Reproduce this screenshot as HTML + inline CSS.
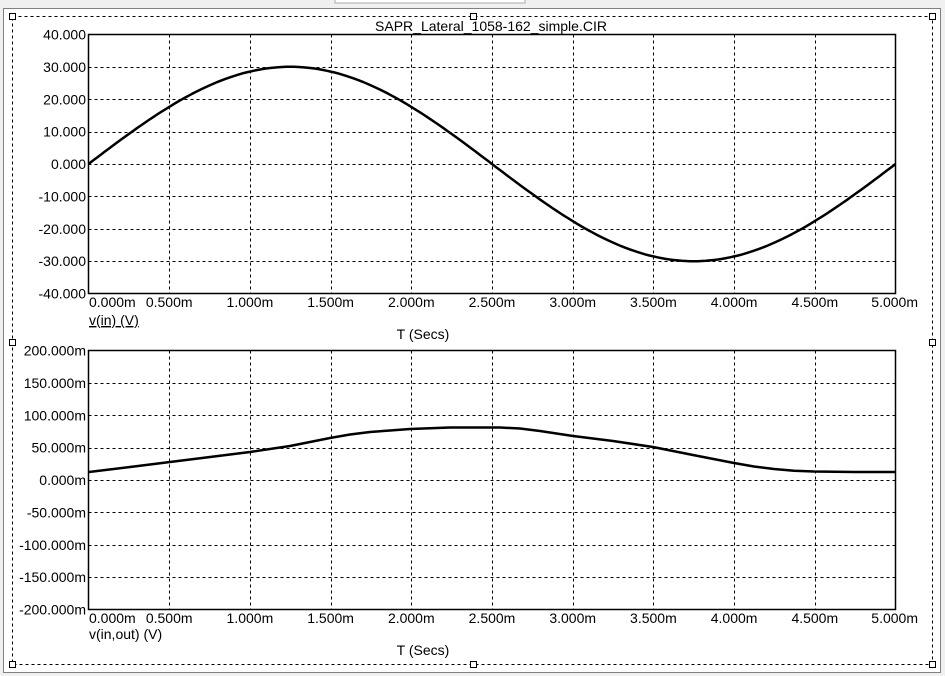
<!DOCTYPE html>
<html><head><meta charset="utf-8"><style>
html,body{margin:0;padding:0;background:#f0f0f0;width:945px;height:676px;overflow:hidden}
svg{display:block}
text{font-family:"Liberation Sans",Arial,sans-serif;font-size:14px;fill:#000}
</style></head><body>
<svg id="s" width="945" height="676" xmlns="http://www.w3.org/2000/svg">
<rect x="0" y="0" width="945" height="676" fill="#f0f0f0"/>
<rect x="335" y="-2" width="190" height="5" fill="#fff" stroke="#aaa"/>
<rect x="3.5" y="8.5" width="937" height="664" fill="#fff" stroke="#808080"/>
<rect x="12.5" y="16.5" width="920" height="648" fill="none" stroke="#000" stroke-dasharray="3,3"/>
<g fill="#fff" stroke="#000">
<rect x="9.5" y="13.5" width="6" height="6"/><rect x="470.5" y="13.5" width="6" height="6"/><rect x="929.5" y="13.5" width="6" height="6"/>
<rect x="9.5" y="339.5" width="6" height="6"/><rect x="929.5" y="339.5" width="6" height="6"/>
<rect x="9.5" y="661.5" width="6" height="6"/><rect x="470.5" y="661.5" width="6" height="6"/><rect x="929.5" y="661.5" width="6" height="6"/>
</g>
<text x="491" y="31" text-anchor="middle">SAPR_Lateral_1058-162_simple.CIR</text>
<g id="g"></g>
<path id="p1" fill="none" stroke="#000" stroke-width="2.5"/>
<polyline fill="none" stroke="#000" stroke-width="2.5" stroke-linejoin="round" points="89,472 130,467 170,462 210,457 250,452 290,446 310,442 330,438 350,434.5 370,432 390,430.5 410,429 450,427.5 500,427.5 520,428.5 540,431 573,436 613,441 653,447 693,455 734,463 754,466.5 774,469 794,470.8 814,471.5 855,472 895,472"/>
<text x="89" y="325" text-decoration="underline">v(in) (V)</text>
<text x="423" y="339" text-anchor="middle">T (Secs)</text>
<text x="89" y="639">v(in,out) (V)</text>
<text x="423" y="655" text-anchor="middle">T (Secs)</text>
</svg>
<script>
var NS="http://www.w3.org/2000/svg",g=document.getElementById("g");
function el(t,a,txt){var e=document.createElementNS(NS,t);for(var k in a)e.setAttribute(k,a[k]);if(txt)e.textContent=txt;g.appendChild(e);}
var L=88.5,R=895.5,W=R-L;
var xl=["0.000m","0.500m","1.000m","1.500m","2.000m","2.500m","3.000m","3.500m","4.000m","4.500m","5.000m"];
function plot(T,B,yl,ly){
 var H=B-T;
 for(var i=1;i<10;i++){var x=Math.round(L+W*i/10)+0.5;el("line",{x1:x,y1:T,x2:x,y2:B,stroke:"#000","stroke-dasharray":"3,3"});}
 for(var j=1;j<8;j++){var y=Math.round(T+H*j/8)+0.5;el("line",{x1:L,y1:y,x2:R,y2:y,stroke:"#000","stroke-dasharray":"3,3"});}
 el("rect",{x:L,y:T,width:W,height:H,fill:"none",stroke:"#000","stroke-width":"1.5"});
 for(var j=0;j<=8;j++){el("text",{x:86,y:T+H*j/8+5,"text-anchor":"end"},yl[j]);}
 for(var i=0;i<=10;i++){var x=L+W*i/10;var a=i==0?"start":(i==10?"end":"middle");if(i==0)x=89;if(i==10)x=918;el("text",{x:x,y:ly,"text-anchor":a},xl[i]);}
}
plot(34.5,293.5,["40.000","30.000","20.000","10.000","0.000","-10.000","-20.000","-30.000","-40.000"],307);
plot(350.5,609.5,["200.000m","150.000m","100.000m","50.000m","0.000m","-50.000m","-100.000m","-150.000m","-200.000m"],623);
var d="";for(var i=0;i<=200;i++){var t=i/200;var x=L+W*t;var y=164-30*Math.sin(2*Math.PI*t)*32.4/10;d+=(i?"L":"M")+x.toFixed(1)+","+y.toFixed(1);}
document.getElementById("p1").setAttribute("d",d);
</script>
</body></html>
